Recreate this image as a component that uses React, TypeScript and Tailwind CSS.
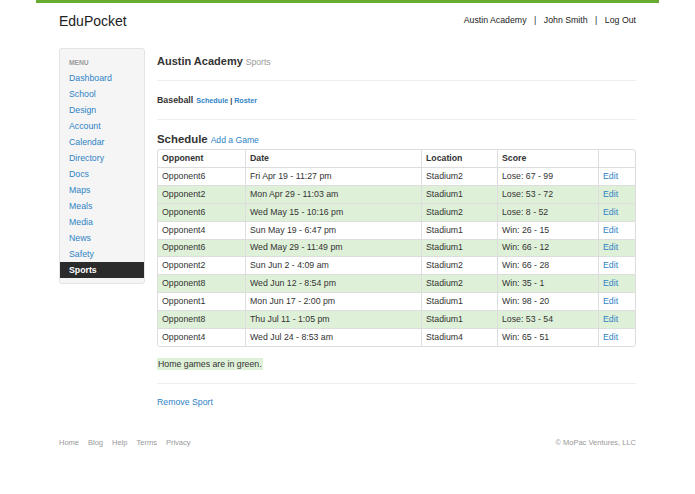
import React from "react";

const menu = ["Dashboard","School","Design","Account","Calendar","Directory","Docs","Maps","Meals","Media","News","Safety"];

const rows: [string,string,string,string,boolean][] = [
  ["Opponent6","Fri Apr 19 - 11:27 pm","Stadium2","Lose: 67 - 99",false],
  ["Opponent2","Mon Apr 29 - 11:03 am","Stadium1","Lose: 53 - 72",true],
  ["Opponent6","Wed May 15 - 10:16 pm","Stadium2","Lose: 8 - 52",true],
  ["Opponent4","Sun May 19 - 6:47 pm","Stadium1","Win: 26 - 15",false],
  ["Opponent6","Wed May 29 - 11:49 pm","Stadium1","Win: 66 - 12",true],
  ["Opponent2","Sun Jun 2 - 4:09 am","Stadium2","Win: 66 - 28",false],
  ["Opponent8","Wed Jun 12 - 8:54 pm","Stadium2","Win: 35 - 1",true],
  ["Opponent1","Mon Jun 17 - 2:00 pm","Stadium1","Win: 98 - 20",false],
  ["Opponent8","Thu Jul 11 - 1:05 pm","Stadium1","Lose: 53 - 54",true],
  ["Opponent4","Wed Jul 24 - 8:53 am","Stadium4","Win: 65 - 51",false],
];

export default function App() {
  return (
    <div className="w-[695px] min-h-[494px] bg-white text-[#333] text-[8.75px]" style={{ fontFamily: '"Liberation Sans", Arial, Helvetica, sans-serif' }}>
      <div className="mx-auto w-[623px] h-[3px] bg-[#66ac30]" />
      <div className="mx-auto w-[577px]">
        <div className="h-[36px] flex items-center justify-between">
          <div className="text-[14px] text-[#222] leading-none">EduPocket</div>
          <div className="flex items-center text-[#222]">
            <span>Austin Academy</span>
            <span className="mx-[7.5px]">|</span>
            <span>John Smith</span>
            <span className="mx-[7.5px]">|</span>
            <span>Log Out</span>
          </div>
        </div>
        <div className="mt-[9px] flex gap-[12px] items-start">
          <div className="w-[86px] shrink-0 bg-[#f5f5f5] border border-[#e3e3e3] rounded-[3px] pb-[5px]">
            <div className="pt-[7px] pl-[9px] leading-[14px] text-[6.7px] font-bold text-[#999]">MENU</div>
            {menu.map((m) => (
              <div key={m} className="h-[16px] leading-[16px] pl-[9px] text-[#2f83c6]">{m}</div>
            ))}
            <div className="h-[16px] leading-[16px] pl-[9px] bg-[#2b2b2b] text-white font-bold">Sports</div>
          </div>
          <div className="flex-1">
            <div className="pt-[6px] pb-[11px] leading-[14px] border-b border-[#eee]">
              <span className="text-[11px] font-bold">Austin Academy</span>
              <span className="text-[8.6px] text-[#999] ml-[3px]">Sports</span>
            </div>
            <div className="pt-[12px] pb-[11px] leading-[14px] border-b border-[#eee]">
              <span className="font-bold text-[8.8px]">Baseball</span>
              <span className="font-bold text-[7.2px] text-[#2f83c6] ml-[3px]">Schedule</span>
              <span className="font-bold text-[7.2px] text-[#333]"> | </span>
              <span className="font-bold text-[7.2px] text-[#2f83c6]">Roster</span>
            </div>
            <div className="pt-[12px] leading-[14px]">
              <span className="text-[11.4px] font-bold">Schedule</span>
              <span className="text-[8.6px] text-[#2f83c6] ml-[3px]">Add a Game</span>
            </div>
            <table className="mt-[2px] w-[479px] table-fixed border-separate border-spacing-0 border border-[#ddd] rounded-[3px] overflow-hidden">
              <colgroup>
                <col className="w-[87px]" />
                <col className="w-[176px]" />
                <col className="w-[76px]" />
                <col className="w-[101px]" />
                <col />
              </colgroup>
              <thead>
                <tr className="h-[17px]">
                  <th className="text-left font-bold px-[4px] p-0">Opponent</th>
                  <th className="text-left font-bold px-[4px] border-l border-[#ddd]">Date</th>
                  <th className="text-left font-bold px-[4px] border-l border-[#ddd]">Location</th>
                  <th className="text-left font-bold px-[4px] border-l border-[#ddd]">Score</th>
                  <th className="border-l border-[#ddd]"></th>
                </tr>
              </thead>
              <tbody>
                {rows.map((r, i) => (
                  <tr key={i} className={"h-[17.9px] " + (r[4] ? "bg-[#dff0d8]" : "bg-white")}>
                    <td className="px-[4px] border-t border-[#ddd]">{r[0]}</td>
                    <td className="px-[4px] border-t border-l border-[#ddd]">{r[1]}</td>
                    <td className="px-[4px] border-t border-l border-[#ddd]">{r[2]}</td>
                    <td className="px-[4px] border-t border-l border-[#ddd]">{r[3]}</td>
                    <td className="px-[4px] border-t border-l border-[#ddd] text-[#2f83c6]">Edit</td>
                  </tr>
                ))}
              </tbody>
            </table>
            <div className="mt-[10px] pb-[12px] leading-[14px] border-b border-[#eee]">
              <span className="bg-[#dff0d8] px-[1px] py-[1px]">Home games are in green.</span>
            </div>
            <div className="pt-[11px] leading-[14px] text-[#2f83c6]">Remove Sport</div>
          </div>
        </div>
        <div className="mt-[27px] flex justify-between leading-[14px] text-[7.5px] text-[#999]">
          <div className="flex gap-[9px]">
            <span>Home</span><span>Blog</span><span>Help</span><span>Terms</span><span>Privacy</span>
          </div>
          <div>© MoPac Ventures, LLC</div>
        </div>
      </div>
    </div>
  );
}
